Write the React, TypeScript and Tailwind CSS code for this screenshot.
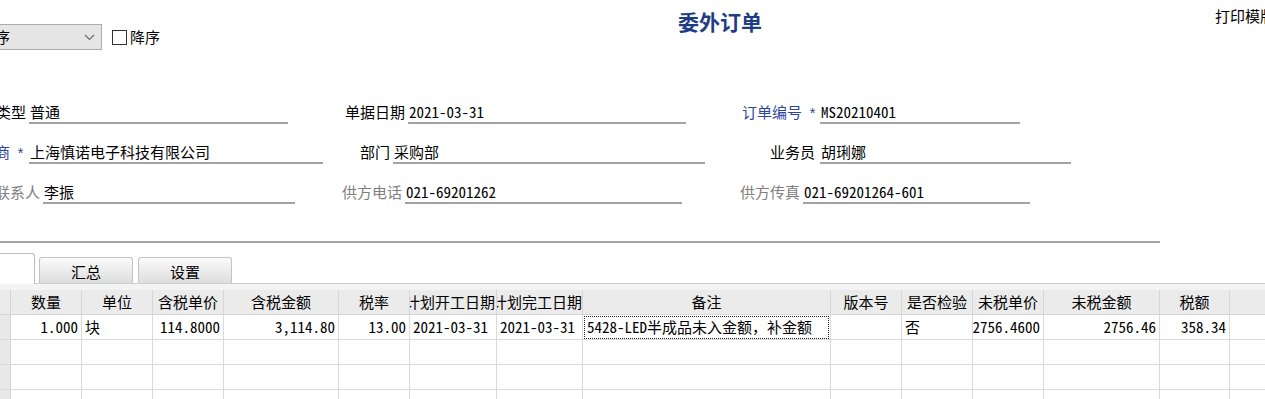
import React from 'react';

const mono = "font-['Noto_Sans_Mono_CJK_SC','Liberation_Mono',monospace]";

type FieldProps = {
  label: string;
  labelCls: string;
  valueCls: string;
  value: string;
  tone?: 'blue' | 'gray' | 'black';
  star?: boolean;
  isMono?: boolean;
};

const Field = ({ label, labelCls, valueCls, value, tone = 'black', star, isMono }: FieldProps) => {
  const color = tone === 'blue' ? 'text-[#2c45a0]' : tone === 'gray' ? 'text-[#808080]' : 'text-black';
  return (
    <div className="flex items-end h-full shrink-0">
      <div className={`${labelCls} flex justify-end items-end overflow-hidden whitespace-nowrap shrink-0 pb-[2px] ${color}`}>
        <span className="shrink-0">{label}</span>
        {star && (
          <span className="shrink-0 ml-[6px] mr-[1px] text-[15px] translate-y-[4px] font-['Liberation_Mono',monospace]">*</span>
        )}
      </div>
      <div className={`${valueCls} h-full flex items-end border-b-2 border-[#a3a3a3] pl-[1px] whitespace-nowrap overflow-hidden`}>
        <span className={isMono ? mono : ''}>{value}</span>
      </div>
    </div>
  );
};

type Col = {
  w: string;
  title: string;
  head?: string;
  value?: string;
  align?: 'left' | 'right';
  isMono?: boolean;
  focus?: boolean;
};

const cols: Col[] = [
  { w: 'w-[71px]', title: '数量', value: '1.000', align: 'right', isMono: true },
  { w: 'w-[71px]', title: '单位', value: '块', align: 'left' },
  { w: 'w-[71px]', title: '含税单价', value: '114.8000', align: 'right', isMono: true },
  { w: 'w-[115px]', title: '含税金额', value: '3,114.80', align: 'right', isMono: true },
  { w: 'w-[71px]', title: '税率', value: '13.00', align: 'right', isMono: true },
  { w: 'w-[87px]', title: '计划开工日期', head: 'justify-start', value: '2021-03-31', align: 'left', isMono: true },
  { w: 'w-[86px]', title: '计划完工日期', head: 'justify-start', value: '2021-03-31', align: 'left', isMono: true },
  { w: 'w-[248px]', title: '备注', focus: true },
  { w: 'w-[71px]', title: '版本号' },
  { w: 'w-[71px]', title: '是否检验', value: '否', align: 'left' },
  { w: 'w-[71px]', title: '未税单价', value: '2756.4600', align: 'right', isMono: true },
  { w: 'w-[116px]', title: '未税金额', value: '2756.46', align: 'right', isMono: true },
  { w: 'w-[70px]', title: '税额', value: '358.34', align: 'right', isMono: true },
  { w: 'w-[60px]', title: '' },
];

const GridRow = ({ filled }: { filled?: boolean }) => (
  <div className="flex h-[25px] border-b border-[#dadada]">
    <div className="w-[11px] shrink-0 bg-[#e8e8e8] border-r border-[#d4d4d4]" />
    {cols.map((c, i) => (
      <div
        key={i}
        className={`${c.w} shrink-0 border-r border-[#dadada] bg-white flex items-center overflow-hidden whitespace-nowrap ${
          c.align === 'right' ? 'justify-end pr-[3px]' : 'justify-start pl-[3px]'
        }`}
      >
        {filled && c.focus && (
          <div className="flex-1 h-[23px] -ml-[2px] mr-[1px] border border-dotted border-[#222] flex items-center pl-[2px]">
            <span className={mono}>5428-LED</span>
            <span>半成品未入金额，补金额</span>
          </div>
        )}
        {filled && c.value && <span className={`shrink-0 ${c.isMono ? mono : ''}`}>{c.value}</span>}
      </div>
    ))}
  </div>
);

export default function App() {
  return (
    <div className="w-[1265px] h-[399px] overflow-hidden bg-white text-black text-[15px] leading-[20px] font-['Noto_Sans_CJK_SC',sans-serif]">
      {/* top bar */}
      <div className="flex items-start h-[84px]">
        <div className="flex items-center mt-[24px] shrink-0">
          <div className="-ml-[22px] w-[124px] h-[26px] bg-[#e5e5e5] border border-[#acacac] flex items-center justify-between pl-[1px] pr-[6px]">
            <span>排序</span>
            <svg width="11" height="7" viewBox="0 0 11 7">
              <polyline points="1,1 5.5,5.5 10,1" fill="none" stroke="#6b6b6b" strokeWidth="1.1" />
            </svg>
          </div>
          <div className="ml-[10px] w-[15px] h-[15px] border border-[#333] bg-white" />
          <span className="ml-[3px]">降序</span>
        </div>
        <div className="ml-[518px] mt-[9px] shrink-0 text-[21px] leading-[24px] font-semibold text-[#1f3d84]">委外订单</div>
        <div className="ml-[453px] mt-[6px] shrink-0 whitespace-nowrap">打印模版</div>
      </div>

      {/* form */}
      <div className="flex h-[40px]">
        <Field label="订单类型" labelCls="w-[29px] pr-[3px]" valueCls="w-[259px]" value="普通" />
        <Field label="单据日期" labelCls="w-[120px] pr-[3px]" valueCls="w-[278px]" value="2021-03-31" isMono />
        <Field label="订单编号" labelCls="w-[134px] pr-[2px]" valueCls="w-[200px]" value="MS20210401" tone="blue" star isMono />
      </div>
      <div className="flex h-[40px]">
        <Field label="供应商" labelCls="w-[29px] pr-[3px]" valueCls="w-[294px]" value="上海慎诺电子科技有限公司" tone="blue" star />
        <Field label="部门" labelCls="w-[70px] pr-[3px]" valueCls="w-[312px]" value="采购部" />
        <Field label="业务员" labelCls="w-[115px] pr-[5px]" valueCls="w-[251px]" value="胡琍娜" />
      </div>
      <div className="flex h-[40px]">
        <Field label="联系人" labelCls="w-[43px] pr-[3px]" valueCls="w-[252px]" value="李振" tone="gray" />
        <Field label="供方电话" labelCls="w-[110px] pr-[3px]" valueCls="w-[277px]" value="021-69201262" tone="gray" isMono />
        <Field label="供方传真" labelCls="w-[121px] pr-[3px]" valueCls="w-[227px]" value="021-69201264-601" tone="gray" isMono />
      </div>

      <div className="mt-[37px] w-[1160px] h-[2px] bg-[#a3a3a3]" />

      {/* tabs */}
      <div className="mt-[10px] flex items-end h-[31px] border-b border-[#cfcfcf]">
        <div className="w-[35px] h-[31px] -mb-px bg-white border-t border-r border-[#bdbdbd] rounded-tr-[3px]" />
        <div className="ml-[4px] w-[94px] h-[26px] pt-[2px] border border-b-0 border-[#c4c4c4] rounded-t-[3px] bg-linear-to-b from-[#fbfbfb] to-[#dddddd] flex items-center justify-center">
          汇总
        </div>
        <div className="ml-[5px] w-[94px] h-[26px] pt-[2px] border border-b-0 border-[#c4c4c4] rounded-t-[3px] bg-linear-to-b from-[#fbfbfb] to-[#dddddd] flex items-center justify-center">
          设置
        </div>
      </div>
      <div className="h-[6px] bg-[#f3f3f3]" />

      {/* grid */}
      <div className="flex h-[25px] bg-[#ebebeb] border-b border-[#d6d6d6]">
        <div className="w-[11px] shrink-0 border-r border-[#d4d4d4]" />
        {cols.map((c, i) => (
          <div
            key={i}
            className={`${c.w} shrink-0 border-r border-[#d6d6d6] flex items-center overflow-hidden whitespace-nowrap ${
              c.head ? 'justify-start' : 'justify-center'
            }`}
          >
            <span className={`shrink-0 ${c.head ? '-ml-[5px]' : ''}`}>{c.title}</span>
          </div>
        ))}
      </div>
      <GridRow filled />
      <GridRow />
      <GridRow />
      <GridRow />
    </div>
  );
}
